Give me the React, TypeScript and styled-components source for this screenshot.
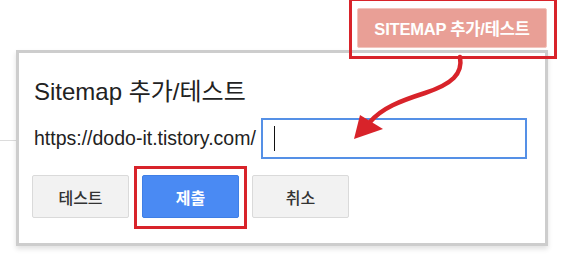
import React from "react";
import styled, { createGlobalStyle } from "styled-components";

const GlobalStyle = createGlobalStyle`
  html, body { margin: 0; padding: 0; background: #ffffff; }
  body { font-family: "Liberation Sans", Arial, "Noto Sans CJK KR", sans-serif; }
  * { box-sizing: border-box; }
`;

const Page = styled.div`
  position: relative;
  width: 573px;
  height: 269px;
  overflow: hidden;
  background: #ffffff;
`;

const BackdropRule = styled.div`
  position: absolute;
  left: 0;
  top: 140px;
  width: 20px;
  height: 1px;
  background: #dcdcdc;
`;

const TopBar = styled.div`
  display: flex;
  justify-content: flex-end;
  height: 50px;
  padding: 8px 26px 0 0;
`;

const Highlight = styled.div<{ $t: number; $r: number; $b: number; $l: number }>`
  position: relative;
  display: inline-flex;
  z-index: 2;
  &::after {
    content: "";
    position: absolute;
    top: ${(p) => -p.$t}px;
    right: ${(p) => -p.$r}px;
    bottom: ${(p) => -p.$b}px;
    left: ${(p) => -p.$l}px;
    border: 3px solid #d8232a;
    pointer-events: none;
  }
`;

const SitemapButton = styled.button`
  width: 190px;
  height: 40px;
  border: 1px solid #f2c4bd;
  border-radius: 2px;
  background: #e99f96;
  color: #ffffff;
  font-family: "Liberation Sans", Arial, "Noto Sans CJK KR", sans-serif;
  font-weight: bold;
  font-size: 16.5px;
  letter-spacing: -0.2px;
  padding: 0;
  display: flex;
  align-items: center;
  justify-content: center;
`;

const Dialog = styled.div`
  position: relative;
  z-index: 1;
  margin-left: 16px;
  width: 532px;
  height: 196px;
  border: 3px solid #cdcdcd;
  background: #ffffff;
  box-shadow: 0 3px 5px rgba(0, 0, 0, 0.12);
  padding: 27px 15px 0 15px;
  display: flex;
  flex-direction: column;
`;

const Title = styled.div`
  font-family: "Liberation Sans", Arial, "Noto Sans CJK KR", sans-serif;
  font-size: 24px;
  line-height: 24px;
  height: 24px;
  color: #222222;
  white-space: nowrap;
`;

const UrlRow = styled.div`
  display: flex;
  align-items: center;
  gap: 5px;
  margin-top: 14px;
  height: 41px;
`;

const UrlLabel = styled.span`
  font-family: "Liberation Sans", Arial, sans-serif;
  font-size: 19.5px;
  color: #222222;
  white-space: nowrap;
`;

const UrlField = styled.div`
  width: 266px;
  height: 41px;
  border: 2px solid #5590e6;
  background: #ffffff;
  display: flex;
  align-items: center;
  padding-left: 11px;
`;

const Caret = styled.span`
  width: 1px;
  height: 25px;
  background: #111111;
`;

const ButtonRow = styled.div`
  display: flex;
  gap: 13px;
  margin-top: 16px;
  margin-left: -2px;
`;

const ActionButton = styled.button<{ $primary?: boolean }>`
  width: 97px;
  height: 43px;
  border-radius: 2px;
  border: 1px solid ${(p) => (p.$primary ? "#3f7fe6" : "#dadada")};
  background: ${(p) => (p.$primary ? "#4a8af3" : "#f2f2f2")};
  color: ${(p) => (p.$primary ? "#ffffff" : "#333333")};
  font-family: "Noto Sans CJK KR", sans-serif;
  font-weight: ${(p) => (p.$primary ? 700 : 500)};
  font-size: 16px;
  padding: 0;
  display: flex;
  align-items: center;
  justify-content: center;
`;

const ArrowSvg = styled.svg`
  position: absolute;
  left: 0;
  top: 0;
  width: 573px;
  height: 269px;
  z-index: 3;
  pointer-events: none;
`;

export default function App() {
  return (
    <>
      <GlobalStyle />
      <Page>
        <BackdropRule />
        <TopBar>
          <Highlight $t={10} $r={10} $b={9} $l={8}>
            <SitemapButton>SITEMAP 추가/테스트</SitemapButton>
          </Highlight>
        </TopBar>
        <Dialog>
          <Title>Sitemap 추가/테스트</Title>
          <UrlRow>
            <UrlLabel>https://dodo-it.tistory.com/</UrlLabel>
            <UrlField>
              <Caret />
            </UrlField>
          </UrlRow>
          <ButtonRow>
            <ActionButton>테스트</ActionButton>
            <Highlight $t={9} $r={8} $b={11} $l={8}>
              <ActionButton $primary>제출</ActionButton>
            </Highlight>
            <ActionButton>취소</ActionButton>
          </ButtonRow>
        </Dialog>
        <ArrowSvg viewBox="0 0 573 269">
          <path
            d="M460 57 C 463 74, 452 84, 425 93 C 400 101, 382 108, 370 122"
            fill="none"
            stroke="#d8232a"
            strokeWidth="4.5"
            strokeLinecap="round"
          />
          <path d="M354 139 L360 115 L383 129 Z" fill="#d8232a" />
        </ArrowSvg>
      </Page>
    </>
  );
}
